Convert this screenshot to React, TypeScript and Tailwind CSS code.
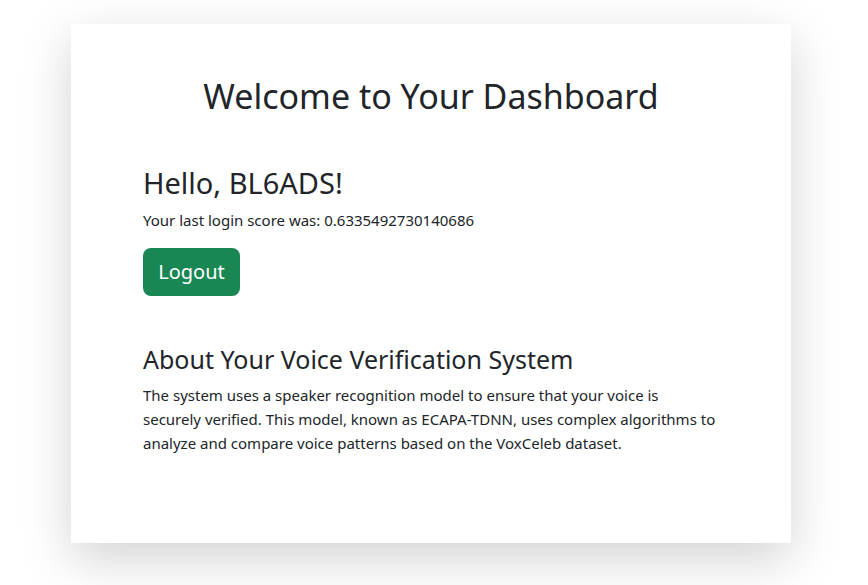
export default function App() {
  return (
    <div className="min-h-[585px] bg-white pt-6 pl-[71px] text-[#212529] [font-family:'Noto_Sans',sans-serif]">
      <div className="w-[720px] h-[519px] bg-white shadow-[0_16px_48px_rgba(0,0,0,0.175)] px-[72px] pt-[51px]">
        <h1 className="text-center text-[34px] leading-[42px] font-normal">Welcome to Your Dashboard</h1>

        <section className="mt-[48px]">
          <h2 className="text-[29px] leading-[35px]">Hello, BL6ADS!</h2>
          <p className="mt-2 text-[15px] leading-6">Your last login score was: 0.6335492730140686</p>
          <button
            type="button"
            className="mt-4 h-12 w-[97px] rounded-lg bg-[#198754] text-[20px] text-white"
          >
            Logout
          </button>
        </section>

        <section className="mt-[48px]">
          <h3 className="text-[25px] leading-[31px]">About Your Voice Verification System</h3>
          <p className="mt-2 w-[575px] text-[15px] leading-6">
            The system uses a speaker recognition model to ensure that your voice is securely verified. This model,
            known as ECAPA-TDNN, uses complex algorithms to analyze and compare voice patterns based on the VoxCeleb
            dataset.
          </p>
        </section>
      </div>
    </div>
  )
}
